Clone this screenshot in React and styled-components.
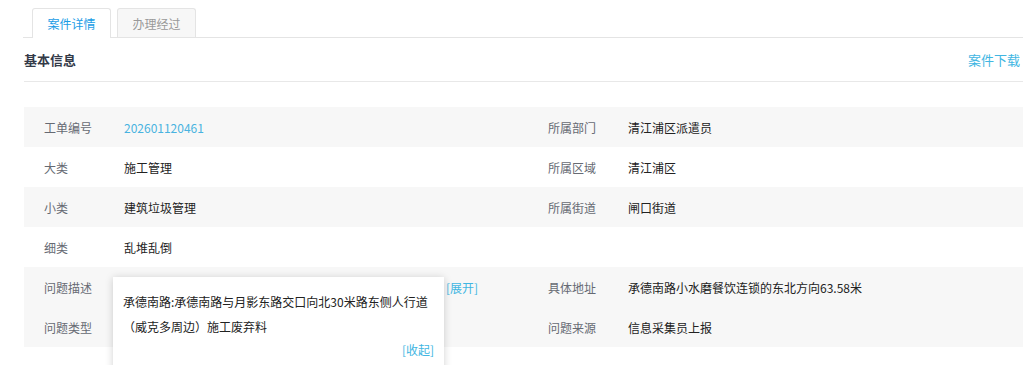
import React, { useState } from "react";
import styled, { createGlobalStyle } from "styled-components";

const GlobalStyle = createGlobalStyle`
  html, body {
    margin: 0;
    padding: 0;
    background: #ffffff;
    font-family: "Noto Sans CJK SC", "Noto Sans", sans-serif;
    font-size: 12px;
    color: #333;
    overflow: hidden;
  }
`;

const Page = styled.div`
  width: 1023px;
  height: 365px;
  position: relative;
  overflow: hidden;
`;

const TabBar = styled.div`
  display: flex;
  gap: 6px;
  margin: 8px 0 0 23px;
  padding-left: 9px;
  border-bottom: 1px solid #e4e4e4;
  height: 29px;
`;

const Tab = styled.div`
  width: 79px;
  box-sizing: border-box;
  display: flex;
  align-items: center;
  justify-content: center;
  border: 1px solid #e4e4e4;
  border-bottom: none;
  border-radius: 3px 3px 0 0;
  font-size: 12px;
  cursor: pointer;
  background: ${(p) => (p.$active ? "#ffffff" : "#f7f7f7")};
  color: ${(p) => (p.$active ? "#1a9de6" : "#999999")};
  height: ${(p) => (p.$active ? "30px" : "29px")};
`;

const Header = styled.div`
  display: flex;
  align-items: center;
  justify-content: space-between;
  height: 43px;
  margin-left: 24px;
  padding-right: 3px;
  border-bottom: 1px solid #e8e8e8;
`;

const Title = styled.div`
  font-size: 13px;
  font-weight: bold;
  color: #333a48;
`;

const Download = styled.a`
  font-size: 13px;
  color: #41b6e2;
  cursor: pointer;
`;

const Table = styled.div`
  position: relative;
  margin: 25px 0 0 24px;
  width: 1008px;
`;

const Row = styled.div`
  display: grid;
  grid-template-columns: 504px 504px;
  height: 40px;
  background: ${(p) => (p.$striped ? "#f7f7f7" : "#ffffff")};
`;

const Cell = styled.div`
  display: flex;
  align-items: center;
  padding-left: 20px;
  min-width: 0;
`;

const Label = styled.span`
  width: 80px;
  flex: none;
  color: #666a73;
`;

const Value = styled.span`
  color: ${(p) => (p.$link ? "#48b3e0" : "#222222")};
  white-space: nowrap;
`;

const Preview = styled.span`
  display: block;
  width: 318px;
  flex: none;
  white-space: nowrap;
  overflow: hidden;
  text-overflow: ellipsis;
  color: #222222;
  visibility: ${(p) => (p.$concealed ? "hidden" : "visible")};
`;

const Toggle = styled.span`
  color: #41b6e2;
  cursor: pointer;
  margin-left: 4px;
  white-space: nowrap;
`;

const Popup = styled.div`
  position: absolute;
  left: 89px;
  top: 170px;
  width: 331px;
  box-sizing: border-box;
  padding: 12px 10px 10px 10px;
  background: #ffffff;
  box-shadow: 0 1px 8px rgba(0, 0, 0, 0.18);
  color: #222222;
  font-size: 12px;
  line-height: 25px;
  z-index: 2;
`;

const PopupFooter = styled.div`
  display: flex;
  justify-content: flex-end;
  line-height: 20px;
  margin-top: 1px;
  height: 60px;
`;

const description =
  "承德南路:承德南路与月影东路交口向北30米路东侧人行道（威克多周边）施工废弃料";

const rows = [
  {
    striped: true,
    left: ["工单编号", "202601120461", true],
    right: ["所属部门", "清江浦区派遣员"],
  },
  { left: ["大类", "施工管理"], right: ["所属区域", "清江浦区"] },
  { striped: true, left: ["小类", "建筑垃圾管理"], right: ["所属街道", "闸口街道"] },
  { left: ["细类", "乱堆乱倒"], right: null },
];

export default function App() {
  const [tab, setTab] = useState(0);
  const [open, setOpen] = useState(true);

  return (
    <Page>
      <GlobalStyle />
      <TabBar>
        {["案件详情", "办理经过"].map((t, i) => (
          <Tab key={t} $active={tab === i} onClick={() => setTab(i)}>
            {t}
          </Tab>
        ))}
      </TabBar>
      <Header>
        <Title>基本信息</Title>
        <Download>案件下载</Download>
      </Header>
      <Table>
        {rows.map((r, i) => (
          <Row key={i} $striped={r.striped}>
            <Cell>
              <Label>{r.left[0]}</Label>
              <Value $link={r.left[2]}>{r.left[1]}</Value>
            </Cell>
            <Cell>
              {r.right && (
                <>
                  <Label>{r.right[0]}</Label>
                  <Value>{r.right[1]}</Value>
                </>
              )}
            </Cell>
          </Row>
        ))}
        <Row $striped>
          <Cell>
            <Label>问题描述</Label>
            <Preview $concealed={open}>{open ? "" : description}</Preview>
            <Toggle onClick={() => setOpen(true)}>[展开]</Toggle>
          </Cell>
          <Cell>
            <Label>具体地址</Label>
            <Value>承德南路小水磨餐饮连锁的东北方向63.58米</Value>
          </Cell>
        </Row>
        <Row $striped>
          <Cell>
            <Label>问题类型</Label>
          </Cell>
          <Cell>
            <Label>问题来源</Label>
            <Value>信息采集员上报</Value>
          </Cell>
        </Row>
        {open && (
          <Popup>
            {description}
            <PopupFooter>
              <Toggle onClick={() => setOpen(false)}>[收起]</Toggle>
            </PopupFooter>
          </Popup>
        )}
      </Table>
    </Page>
  );
}
